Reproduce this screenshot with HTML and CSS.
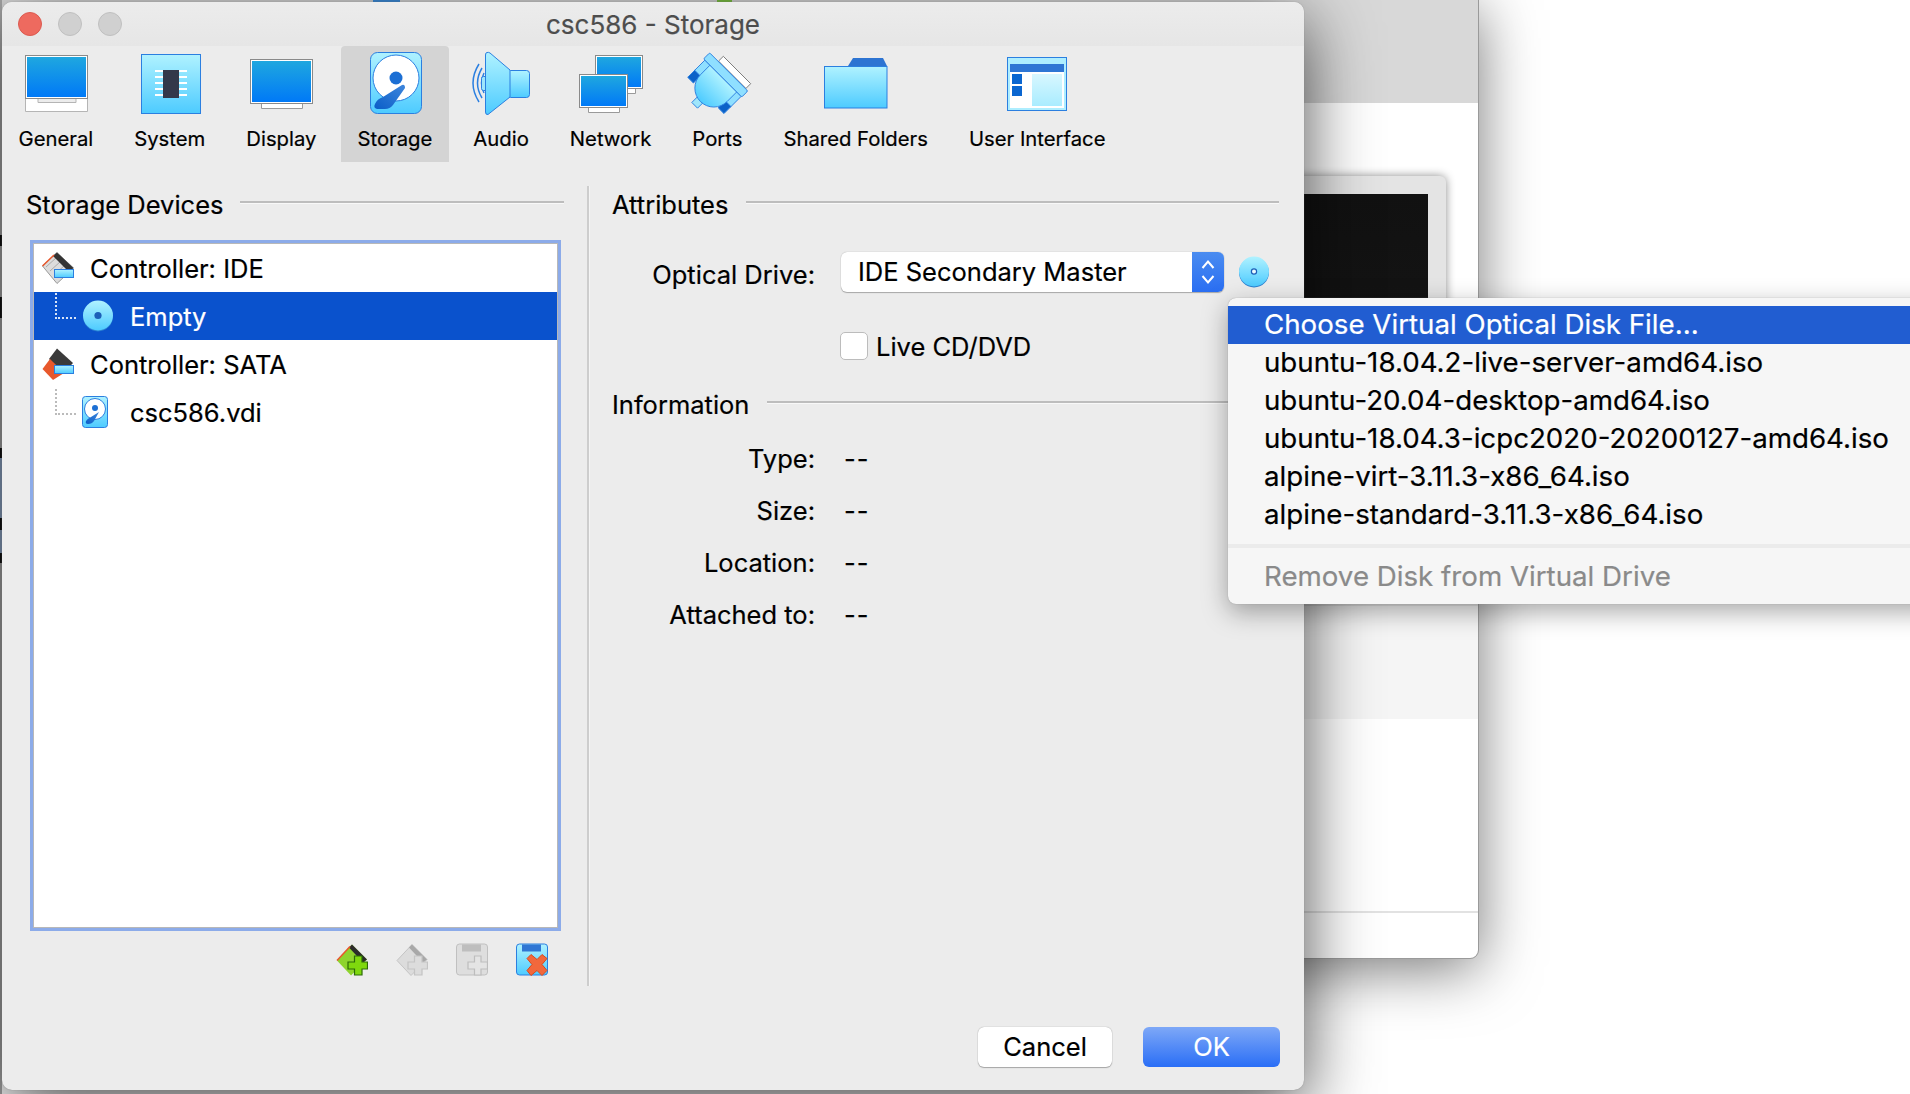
FILE: index.html
```html
<!DOCTYPE HTML>
<html>
	<head>
		<title>csc586 - Storage</title>
		<link rel="stylesheet" href="styles.css">
	</head>
	<body>
		<svg class="defs">
			<defs>
				<linearGradient id="sky" x1="0" y1="0" x2="0" y2="1"><stop offset="0" stop-color="#b0f2ff"/><stop offset="1" stop-color="#4dcbff"/></linearGradient>
				<linearGradient id="screen" x1="0" y1="0" x2="0" y2="1"><stop offset="0" stop-color="#1fa7df"/><stop offset="1" stop-color="#0079f7"/></linearGradient>
				<linearGradient id="arm" x1="1" y1="0" x2="0" y2="1"><stop offset="0" stop-color="#3f86dc"/><stop offset="1" stop-color="#0a5ec8"/></linearGradient>
				<linearGradient id="pane" x1="0" y1="0" x2="0" y2="1"><stop offset="0" stop-color="#d8f7ff"/><stop offset="1" stop-color="#a9ecff"/></linearGradient>
				<symbol id="disc" viewBox="0 0 32 32">
					<circle cx="16" cy="16.5" r="15" fill="#2a7fd0"/>
					<circle cx="16" cy="15.5" r="15" fill="url(#sky)"/>
					<circle cx="16" cy="15.5" r="3.6" fill="#1d5fb8"/>
				</symbol>
				<symbol id="disc-small" viewBox="0 0 32 32">
					<circle cx="16" cy="16.5" r="15" fill="#2a7fd0"/>
					<circle cx="16" cy="15.5" r="15" fill="url(#sky)"/>
					<circle cx="16" cy="15.5" r="2.6" fill="#eafaff" stroke="#1d5fb8" stroke-width="1.2"/>
				</symbol>
				<symbol id="hdd" viewBox="0 0 26 32">
					<rect x="0.5" y="0.5" width="25" height="31" rx="3" fill="url(#sky)" stroke="#2b7fe0"/>
					<circle cx="13" cy="13" r="10.5" fill="#fff" stroke="#2b7fe0"/>
					<circle cx="13" cy="12" r="3" fill="#1c6fd4"/>
					<path d="M17 16 L12 25 Q10 28 6 28 Q3 28 4 25 Q5 23 9 21Z" fill="url(#arm)"/>
				</symbol>
			</defs>
		</svg>

		<div class="back-window">
			<div class="back-band"></div>
			<div class="back-preview"><div class="back-screen"></div></div>
			<div class="back-row back-row-one"></div>
			<div class="back-row back-row-two"></div>
		</div>
		<div class="back-edge"></div>
		<div class="back-bit bit-blue"></div>
		<div class="back-bit bit-green"></div>

		<div class="dialog">
			<div class="titlebar">
				<div class="lights">
					<span class="light light-red"></span>
					<span class="light"></span>
					<span class="light"></span>
				</div>
				<div class="title">csc586 - Storage</div>
			</div>

			<div class="toolbar">
				<div class="tool">
					<svg class="tool-icon" viewBox="0 0 64 64">
						<path d="M1.5 46.5H14V50.5H52V46.5H63.5V59.5H1.5Z" fill="#fff" stroke="#b5b5b5"/>
						<rect x="1.5" y="3.5" width="62" height="43" fill="#fff" stroke="#8a8a8a"/>
						<rect x="3" y="5" width="59" height="40" fill="url(#screen)"/>
					</svg>
					<span>General</span>
				</div>
				<div class="tool">
					<svg class="tool-icon" viewBox="0 0 64 64">
						<rect x="3.5" y="2.5" width="59" height="59" fill="url(#sky)" stroke="#2b7fe0"/>
						<path d="M17 19H49M17 25H49M17 31H49M17 37H49M17 43H49" stroke="#fff" stroke-width="2"/>
						<rect x="25" y="18" width="16" height="28" fill="#33384a"/>
					</svg>
					<span>System</span>
				</div>
				<div class="tool">
					<svg class="tool-icon" viewBox="0 0 64 64">
						<path d="M12.5 50H53.5V56.5H12.5Z" fill="#fff" stroke="#9a9a9a"/>
						<rect x="1.5" y="7.5" width="62" height="44" fill="#fff" stroke="#8a8a8a"/>
						<rect x="3" y="9" width="59" height="41" fill="url(#screen)"/>
					</svg>
					<span>Display</span>
				</div>
				<div class="tool tool-active">
					<svg class="tool-icon" viewBox="0 0 64 64">
						<rect x="7.5" y="0.5" width="51" height="61" rx="7" fill="url(#sky)" stroke="#2b7fe0"/>
						<circle cx="33" cy="26" r="23" fill="#fff" stroke="#2b7fe0"/>
						<circle cx="33" cy="26" r="6.5" fill="#1c6fd4"/>
						<path d="M39 33 Q42 32 42 36 L30 53 Q27 57 22 57 L14 57 Q10 56 12 52 Q14 47 20 45Z" fill="url(#arm)"/>
					</svg>
					<span>Storage</span>
				</div>
				<div class="tool">
					<svg class="tool-icon" viewBox="0 0 64 64">
						<path d="M10 12 Q-2 31 10 50M13 16 Q4 31 13 46M15 21 Q10 31 15 41" fill="none" stroke="#2b7fe0" stroke-width="1.5"/>
						<rect x="12.5" y="24.5" width="6" height="14" rx="2" fill="#9fe6fb" stroke="#2b7fe0"/>
						<rect x="38.5" y="18.5" width="22" height="27" rx="3" fill="url(#sky)" stroke="#2b7fe0"/>
						<path d="M18 0.5 Q16.5 0.5 16.5 3 V60 Q16.5 63 19 62.5 L41 45 V18 L21 1 Q19.5 0 18 0.5Z" fill="url(#sky)" stroke="#2b7fe0"/>
					</svg>
					<span>Audio</span>
				</div>
				<div class="tool">
					<svg class="tool-icon" viewBox="0 0 64 64">
						<path d="M24.5 35H56.5V41.5H24.5Z" fill="#fff" stroke="#9a9a9a"/>
						<rect x="16.5" y="3.5" width="47" height="33" fill="#fff" stroke="#8a8a8a"/>
						<rect x="18" y="5" width="44" height="30" fill="url(#screen)"/>
						<path d="M9.5 53H40.5V60.5H9.5Z" fill="#fff" stroke="#9a9a9a"/>
						<rect x="0.5" y="22.5" width="48" height="33" fill="#fff" stroke="#8a8a8a"/>
						<rect x="2" y="24" width="45" height="30" fill="url(#screen)"/>
					</svg>
					<span>Network</span>
				</div>
				<div class="tool">
					<svg class="tool-icon" viewBox="0 0 64 64">
						<g transform="translate(31 32) rotate(45) scale(.9) translate(-32 -34)" stroke="#2b7fe0">
							<path d="M16 6.5H59V14H16Z" fill="#fff" stroke="#777"/>
							<rect x="27.5" y="56.5" width="9" height="11" fill="#9fe6fb"/>
							<rect x="4.5" y="24" width="9" height="17" fill="#8fdfff"/>
							<rect x="52.5" y="24" width="9" height="17" fill="#8fdfff"/>
							<rect x="4.5" y="40" width="9" height="11" fill="#0b62c8"/>
							<rect x="52.5" y="40" width="9" height="11" fill="#0b62c8"/>
							<path d="M12.5 24H54.5V39A21 21 0 0 1 12.5 39Z" fill="url(#sky)"/>
							<rect x="2.5" y="14.5" width="60" height="9.5" rx="1.5" fill="#8fdfff"/>
						</g>
					</svg>
					<span>Ports</span>
				</div>
				<div class="tool">
					<svg class="tool-icon" viewBox="0 0 64 64">
						<path d="M24 14 L29 6 H59 L63 14Z" fill="#2d74d2"/>
						<rect x="0.5" y="14.5" width="62.5" height="41.5" fill="url(#sky)" stroke="#2b7fe0"/>
					</svg>
					<span>Shared Folders</span>
				</div>
				<div class="tool">
					<svg class="tool-icon" viewBox="0 0 64 64">
						<rect x="2.5" y="5.5" width="59" height="53" fill="#aeeeff" stroke="#2b7fe0"/>
						<rect x="5" y="12" width="54" height="44" fill="#fff"/>
						<rect x="5" y="12" width="54" height="8" fill="#2f76d4"/>
						<rect x="7" y="22" width="10" height="10" fill="#0b66d0"/>
						<rect x="7" y="34" width="10" height="10" fill="#0b66d0"/>
						<rect x="27" y="22" width="30" height="32" fill="url(#pane)"/>
					</svg>
					<span>User Interface</span>
				</div>
			</div>

			<div class="panes">
				<div class="pane-left">
					<div class="section-head"><span>Storage Devices</span><i class="rule"></i></div>
					<div class="tree">
						<div class="tree-row">
							<svg class="tree-icon" viewBox="0 0 32 32">
								<path d="M0.5 14 L15 0.5 L31.5 16 L15 31.5Z" fill="#dcdcdc" stroke="#9a9a9a"/>
								<path d="M4 15 L15 5M8 19 L19 9M12 23 L23 13" stroke="#aaa"/>
								<path d="M15 0.5 L31.5 16 L27 20 L11 4Z" fill="#333"/>
								<path d="M0.5 14 L12 3" stroke="#e8562a" stroke-width="1.5"/>
								<rect x="12.5" y="17.5" width="19" height="8" fill="url(#sky)" stroke="#2b7fe0"/>
							</svg>
							<span>Controller: IDE</span>
						</div>
						<div class="tree-row tree-child tree-selected">
							<i class="tree-link"></i>
							<svg class="tree-icon"><use href="#disc"/></svg>
							<span>Empty</span>
						</div>
						<div class="tree-row">
							<svg class="tree-icon" viewBox="0 0 32 32">
								<path d="M15 0.5 L31 15 L22 25 L7 11Z" fill="#3a3a3a"/>
								<path d="M0.5 21 L8 11 L22 25 L11 32Z" fill="#e8582c"/>
								<rect x="12.5" y="17.5" width="19" height="8" fill="url(#sky)" stroke="#2b7fe0"/>
							</svg>
							<span>Controller: SATA</span>
						</div>
						<div class="tree-row tree-child">
							<i class="tree-link"></i>
							<svg class="tree-icon" viewBox="0 0 32 32"><use href="#hdd" width="26" height="32"/></svg>
							<span>csc586.vdi</span>
						</div>
					</div>
					<div class="tree-tools">
						<svg class="small-tool" viewBox="0 0 32 32">
							<path d="M1 17 L16 1 L31 16 L15 32Z" fill="#8ed42e"/>
							<path d="M16 1 L31 16 L27 19 L13 4Z" fill="#2b2b2b"/>
							<path d="M1 17 L14 3" stroke="#e8562a" stroke-width="1.5"/>
							<path d="M18.5 12.5H26V18.5H31.5V25.5H26V31.5H18.5V25.5H12V18.5H18.5Z" fill="#7fd80e" stroke="#2c6a08" stroke-width="1.2"/>
						</svg>
						<svg class="small-tool" viewBox="0 0 32 32">
							<path d="M1 17 L16 1 L31 16 L15 32Z" fill="#dcdcdc" stroke="#c4c4c4"/>
							<path d="M16 1 L31 16 L27 19 L13 4Z" fill="#a8a8a8"/>
							<path d="M18.5 12.5H26V18.5H31.5V25.5H26V31.5H18.5V25.5H12V18.5H18.5Z" fill="#dcdcdc" stroke="#c4c4c4" stroke-width="1.2"/>
						</svg>
						<svg class="small-tool" viewBox="0 0 32 32">
							<rect x="0.5" y="0.5" width="31" height="31" rx="3" fill="#dedede" stroke="#c0c0c0"/>
							<rect x="6" y="1" width="19" height="7" fill="#bebebe"/>
							<path d="M18.5 12.5H25V18.5H31.5V25.5H25V31.5H18.5V25.5H12V18.5H18.5Z" fill="#e4e4e4" stroke="#bdbdbd" stroke-width="1.2"/>
						</svg>
						<svg class="small-tool" viewBox="0 0 32 32">
							<rect x="0.5" y="0.5" width="31" height="31" rx="3" fill="url(#sky)" stroke="#2b7fe0"/>
							<rect x="6" y="1" width="19" height="7" fill="#2f76d4"/>
							<path d="M11 15 L15 11 L21 16 L26 11 L31 15 L26 21 L31 27 L26 32 L21 27 L15 32 L11 27 L16 21Z" fill="#f2683c" stroke="#d9481c"/>
						</svg>
					</div>
				</div>

				<div class="pane-rule"></div>

				<div class="pane-right">
					<div class="section-head"><span>Attributes</span><i class="rule"></i></div>
					<div class="field field-drive">
						<label class="field-label">Optical Drive:</label>
						<div class="select">
							<span class="select-text">IDE Secondary Master</span>
							<span class="select-arrows">
								<svg width="16" height="30" viewBox="0 0 16 30"><path d="M2.5 11 L8 4.5 L13.5 11M2.5 19 L8 25.5 L13.5 19" fill="none" stroke="#fff" stroke-width="2"/></svg>
							</span>
						</div>
						<svg class="disc-button"><use href="#disc-small"/></svg>
					</div>
					<div class="field field-live">
						<span class="field-label"></span>
						<div class="check-wrap"><span class="checkbox"></span><span>Live CD/DVD</span></div>
					</div>
					<div class="section-head section-info"><span>Information</span><i class="rule"></i></div>
					<div class="info-grid">
						<span class="field-label">Type:</span><span class="info-value">--</span>
						<span class="field-label">Size:</span><span class="info-value">--</span>
						<span class="field-label">Location:</span><span class="info-value">--</span>
						<span class="field-label">Attached to:</span><span class="info-value">--</span>
					</div>
				</div>
			</div>

			<div class="footer">
				<button class="btn btn-cancel">Cancel</button>
				<button class="btn btn-ok">OK</button>
			</div>
		</div>

		<ul class="menu">
			<li class="menu-item menu-current">Choose Virtual Optical Disk File...</li>
			<li class="menu-item">ubuntu-18.04.2-live-server-amd64.iso</li>
			<li class="menu-item">ubuntu-20.04-desktop-amd64.iso</li>
			<li class="menu-item">ubuntu-18.04.3-icpc2020-20200127-amd64.iso</li>
			<li class="menu-item">alpine-virt-3.11.3-x86_64.iso</li>
			<li class="menu-item">alpine-standard-3.11.3-x86_64.iso</li>
			<li class="menu-sep"></li>
			<li class="menu-item menu-off">Remove Disk from Virtual Drive</li>
		</ul>
	</body>
</html>
```

FILE: styles.css
```css
html, body
{
	margin: 0;
	width: 1910px;
	height: 1094px;
	overflow: hidden;
	background: #fff;
	font-family: "Inter", "Liberation Sans", sans-serif;
	font-size: 25.5px;
	color: #000;
	-webkit-text-stroke: .2px currentColor;
}

.defs
{
	position: absolute;
	width: 0;
	height: 0;
}

/* the window behind the dialog */
.back-window
{
	position: absolute;
	left: 0;
	top: 0;
	width: 1478px;
	height: 958px;
	background: #fff;
	border-radius: 0 0 8px 0;
	box-shadow: 1px 0 0 #9a9a9a, 0 1px 0 #9a9a9a, 0 10px 60px rgba(0,0,0,.55);
}

.back-band
{
	height: 103px;
	background: #d8d8d8;
}

.back-preview
{
	position: absolute;
	left: 1000px;
	top: 176px;
	width: 446px;
	height: 420px;
	background: #e4e4e4;
	border-radius: 6px 6px 0 0;
	box-shadow: 0 0 10px rgba(0,0,0,.45);
}

.back-screen
{
	margin: 18px 18px 0 0;
	height: 402px;
	background: linear-gradient(#111, #161616 55%, #000 68%);
}

.back-row
{
	position: absolute;
	left: 0;
	right: 0;
	border-top: 2px solid #e2e2e2;
}

.back-row-one
{
	top: 604px;
	height: 113px;
	background: #f5f5f5;
}

.back-row-two
{
	top: 911px;
}

.back-edge
{
	position: absolute;
	left: 0;
	top: 0;
	width: 2px;
	height: 1094px;
	background: linear-gradient(#a8a8a8 235px, #111 235px, #111 246px, #a8a8a8 246px, #a8a8a8 297px, #111 297px, #111 318px, #a8a8a8 318px, #a8a8a8 448px, #111 448px, #111 458px, #8ea6c8 458px, #8ea6c8 518px, #111 518px, #111 530px, #8ea6c8 530px, #8ea6c8 553px, #111 553px, #111 563px, #a8a8a8 563px);
}

.back-bit
{
	position: absolute;
	top: 0;
	height: 2px;
}

.bit-blue
{
	left: 373px;
	width: 27px;
	background: #3c8fe0;
}

.bit-green
{
	left: 717px;
	width: 15px;
	background: #7cc243;
}

/* dialog */
.dialog
{
	position: absolute;
	left: 2px;
	top: 2px;
	width: 1302px;
	height: 1088px;
	display: flex;
	flex-direction: column;
	background: #ececec;
	border-radius: 10px;
	box-shadow: 0 0 1px #777, 0 18px 70px rgba(0,0,0,.7);
}

.titlebar
{
	height: 44px;
	flex: none;
	display: grid;
	grid-template-columns: 1fr auto 1fr;
	align-items: center;
	background: linear-gradient(#ececec, #e6e6e6);
	border-radius: 10px 10px 0 0;
}

.lights
{
	display: flex;
	gap: 16px;
	padding-left: 16px;
}

.light
{
	width: 24px;
	height: 24px;
	box-sizing: border-box;
	border-radius: 50%;
	background: #d0d0d0;
	border: 1px solid #c0c0c0;
}

.light-red
{
	background: #ee6a5f;
	border-color: #dc5a50;
}

.title
{
	font-size: 26px;
	color: #4d4d4d;
	margin-top: 1px;
}

.toolbar
{
	height: 116px;
	flex: none;
	display: flex;
	gap: 8px;
}

.tool
{
	display: flex;
	flex-direction: column;
	align-items: center;
	padding: 6px 16.5px 0;
	font-size: 20.3px;
	border-radius: 4px 4px 0 0;
}

.tool-active
{
	background: #d4d4d4;
}

.tool-icon
{
	width: 64px;
	height: 64px;
	flex: none;
	overflow: visible;
	margin: 0 -20px 10px;
}

.panes
{
	flex: none;
	height: 824px;
	display: flex;
}

.pane-left
{
	width: 585px;
	box-sizing: border-box;
	padding: 25px 23px 0 24px;
}

.pane-left .section-head
{
	gap: 16px;
}

.pane-rule
{
	width: 2px;
	height: 800px;
	margin-top: 24px;
	background: #cdcdcd;
	border-right: 1px solid #f4f4f4;
}

.pane-right
{
	flex: 1;
	min-width: 0;
	padding: 25px 25px 0 22px;
}

.section-head
{
	display: flex;
	align-items: center;
	gap: 18px;
	height: 34px;
}

.rule
{
	flex: 1;
	height: 2px;
	margin-top: -4px;
	background: #bdbdbd;
	border-bottom: 1px solid #f8f8f8;
}

/* tree */
.tree
{
	width: 531px;
	height: 691px;
	box-sizing: border-box;
	margin: 19px 0 0 4px;
	padding: 1px;
	background: #fff;
	border: 3px solid #8cabe9;
	box-shadow: inset 0 0 0 1px #b8b8b8;
}

.tree-row
{
	position: relative;
	height: 48px;
	display: flex;
	align-items: center;
	gap: 16px;
	padding-left: 8px;
}

.tree-child
{
	padding-left: 48px;
}

.tree-selected
{
	background: #0a52cd;
	color: #fff;
}

.tree-icon
{
	width: 32px;
	height: 32px;
	flex: none;
}

.tree-link
{
	position: absolute;
	left: 21px;
	top: 1px;
	width: 19px;
	height: 24px;
	border-left: 2px dotted #bbb;
	border-bottom: 2px dotted #bbb;
}

.tree-selected .tree-link
{
	border-color: #d8e4f8;
}

.tree-tools
{
	display: flex;
	justify-content: flex-end;
	gap: 28px;
	margin-top: 12px;
	padding-right: 16px;
}

.small-tool
{
	width: 32px;
	height: 33px;
}

/* attributes */
.field
{
	display: flex;
	align-items: center;
	gap: 26px;
}

.field-label
{
	width: 203px;
	flex: none;
	text-align: right;
}

.field-drive
{
	margin-top: 31px;
	height: 40px;
}

.field-drive .field-label
{
	position: relative;
	top: 2px;
}

.select
{
	width: 383px;
	height: 40px;
	box-sizing: border-box;
	display: flex;
	align-items: center;
	background: #fff;
	border-radius: 6px;
	box-shadow: 0 0 1px #999, 0 1px 1px #aaa;
}

.select-text
{
	flex: 1;
	padding: 0 0 2px 17px;
}

.select-arrows
{
	width: 32px;
	height: 40px;
	display: flex;
	align-items: center;
	justify-content: center;
	background: linear-gradient(#4a8cf0, #2a6ef2);
	border-radius: 0 6px 6px 0;
}

.disc-button
{
	width: 32px;
	height: 32px;
	margin-left: -12px;
}

.field-live
{
	margin-top: 40px;
	height: 28px;
}

.field-live .field-label
{
	margin-right: -1px;
}

.check-wrap
{
	display: flex;
	align-items: center;
	gap: 8px;
}

.checkbox
{
	width: 28px;
	height: 28px;
	box-sizing: border-box;
	background: #fff;
	border: 1px solid #bcbcbc;
	border-radius: 5px;
}

.section-info
{
	margin-top: 27px;
}

.info-grid
{
	display: grid;
	grid-template-columns: 203px 1fr;
	column-gap: 29px;
	row-gap: 18px;
	margin-top: 21px;
	line-height: 34px;
}

.info-value
{
	letter-spacing: 1px;
}

/* footer */
.footer
{
	flex: 1;
	display: flex;
	justify-content: flex-end;
	align-items: flex-start;
	gap: 31px;
	padding: 41px 24px 0 0;
}

.btn
{
	height: 40px;
	padding: 0 0 2px;
	font: inherit;
	border-radius: 6px;
	border: none;
}

.btn-cancel
{
	width: 134px;
	background: #fff;
	color: #000;
	box-shadow: 0 0 1px #888, 0 1px 1px #aaa;
}

.btn-ok
{
	width: 137px;
	color: #fff;
	background: linear-gradient(#7ea8f7, #2a6ef6);
}

/* popup menu */
.menu
{
	position: absolute;
	left: 1228px;
	top: 298px;
	width: 720px;
	height: 306px;
	box-sizing: border-box;
	margin: 0;
	padding: 8px 0 0;
	list-style: none;
	font-size: 27.7px;
	background: #f6f6f6;
	border-radius: 8px;
	box-shadow: 0 0 1px #888, 0 8px 26px rgba(0,0,0,.34);
}

.menu-item
{
	height: 38px;
	line-height: 36px;
	padding-left: 36px;
}

.menu-current
{
	background: #215dd1;
	color: #fff;
}

.menu-sep
{
	height: 4px;
	margin: 10px 0 10px;
	background: #ebebeb;
}

.menu-off
{
	color: #8a8a8a;
}
```
